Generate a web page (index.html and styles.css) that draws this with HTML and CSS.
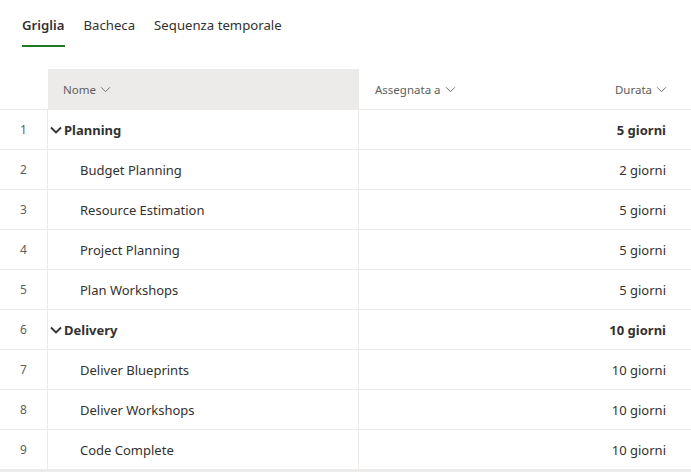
FILE: index.html
```html
<!DOCTYPE html>
<html lang="it">
<head>
<meta charset="utf-8">
<link rel="stylesheet" href="styles.css">
</head>
<body>
<div class="page">
  <nav class="tabs">
    <div class="tab active">Griglia</div>
    <div class="tab">Bacheca</div>
    <div class="tab">Sequenza temporale</div>
  </nav>
  <div class="grid">
    <div class="row head">
      <div class="c num"></div>
      <div class="c name hname">Nome <svg class="chev" viewBox="0 0 12 8"><path d="M1 1.5 L6 6.5 L11 1.5" /></svg></div>
      <div class="c assigned">Assegnata a <svg class="chev" viewBox="0 0 12 8"><path d="M1 1.5 L6 6.5 L11 1.5" /></svg></div>
      <div class="c dur">Durata <svg class="chev" viewBox="0 0 12 8"><path d="M1 1.5 L6 6.5 L11 1.5" /></svg></div>
    </div>
    <div class="row group">
      <div class="c num">1</div>
      <div class="c name"><svg class="gchev" viewBox="0 0 12 8"><path d="M1 1.5 L6 6.5 L11 1.5" /></svg>Planning</div>
      <div class="c assigned"></div>
      <div class="c dur">5 giorni</div>
    </div>
    <div class="row">
      <div class="c num">2</div>
      <div class="c name child">Budget Planning</div>
      <div class="c assigned"></div>
      <div class="c dur">2 giorni</div>
    </div>
    <div class="row">
      <div class="c num">3</div>
      <div class="c name child">Resource Estimation</div>
      <div class="c assigned"></div>
      <div class="c dur">5 giorni</div>
    </div>
    <div class="row">
      <div class="c num">4</div>
      <div class="c name child">Project Planning</div>
      <div class="c assigned"></div>
      <div class="c dur">5 giorni</div>
    </div>
    <div class="row">
      <div class="c num">5</div>
      <div class="c name child">Plan Workshops</div>
      <div class="c assigned"></div>
      <div class="c dur">5 giorni</div>
    </div>
    <div class="row group">
      <div class="c num">6</div>
      <div class="c name"><svg class="gchev" viewBox="0 0 12 8"><path d="M1 1.5 L6 6.5 L11 1.5" /></svg>Delivery</div>
      <div class="c assigned"></div>
      <div class="c dur">10 giorni</div>
    </div>
    <div class="row">
      <div class="c num">7</div>
      <div class="c name child">Deliver Blueprints</div>
      <div class="c assigned"></div>
      <div class="c dur">10 giorni</div>
    </div>
    <div class="row">
      <div class="c num">8</div>
      <div class="c name child">Deliver Workshops</div>
      <div class="c assigned"></div>
      <div class="c dur">10 giorni</div>
    </div>
    <div class="row last">
      <div class="c num">9</div>
      <div class="c name child">Code Complete</div>
      <div class="c assigned"></div>
      <div class="c dur">10 giorni</div>
    </div>
  </div>
</div>
</body>
</html>
```

FILE: styles.css
```css
* { box-sizing: border-box; }
html, body { margin: 0; padding: 0; background: #fff; }
body {
  font-family: "Noto Sans", "Open Sans", "Liberation Sans", sans-serif;
  color: #323130;
  width: 691px;
  height: 472px;
  overflow: hidden;
}
.tabs {
  display: flex;
  height: 69px;
  padding-left: 22px;
}
.tab {
  font-size: 13.2px;
  height: 47px;
  line-height: 16px;
  padding-top: 17px;
  margin-right: 19px;
  color: #323130;
}
.tab.active {
  font-weight: 600;
  border-bottom: 2px solid #217a21;
  padding-right: 1px;
  margin-right: 18px;
}
.grid { display: flex; flex-direction: column; }
.row {
  display: grid;
  grid-template-columns: 48px 311px 1fr 190px;
  height: 40px;
  border-bottom: 1px solid #edebe9;
  font-size: 13px;
}
.row.head { height: 41px; font-size: 11.5px; color: #605e5c; }
.c { display: flex; align-items: center; }
.num {
  justify-content: center;
  border-right: 1px solid #edebe9;
  font-size: 12px;
  font-weight: 400;
  color: #605e5c;
}
.head .num { border-right: none; }
.name { border-right: 1px solid #edebe9; }
.head .name { background: #edebe9; border-right: none; padding-left: 15px; }
.head .assigned { padding-left: 16px; }
.dur { justify-content: flex-end; padding-right: 25px; }
.head .dur { padding-right: 24px; }
.chev { width: 11px; height: 7px; margin-left: 4px; fill: none; stroke: #605e5c; stroke-width: 1; }
.group .name, .group .dur { font-weight: 700; }
.group .name { padding-left: 2px; }
.gchev { width: 12px; height: 8px; margin-right: 2px; fill: none; stroke: #323130; stroke-width: 1.8; }
.child { padding-left: 32px; }
.row.last { border-bottom: 3px solid #edebe9; height: 42px; }
```
